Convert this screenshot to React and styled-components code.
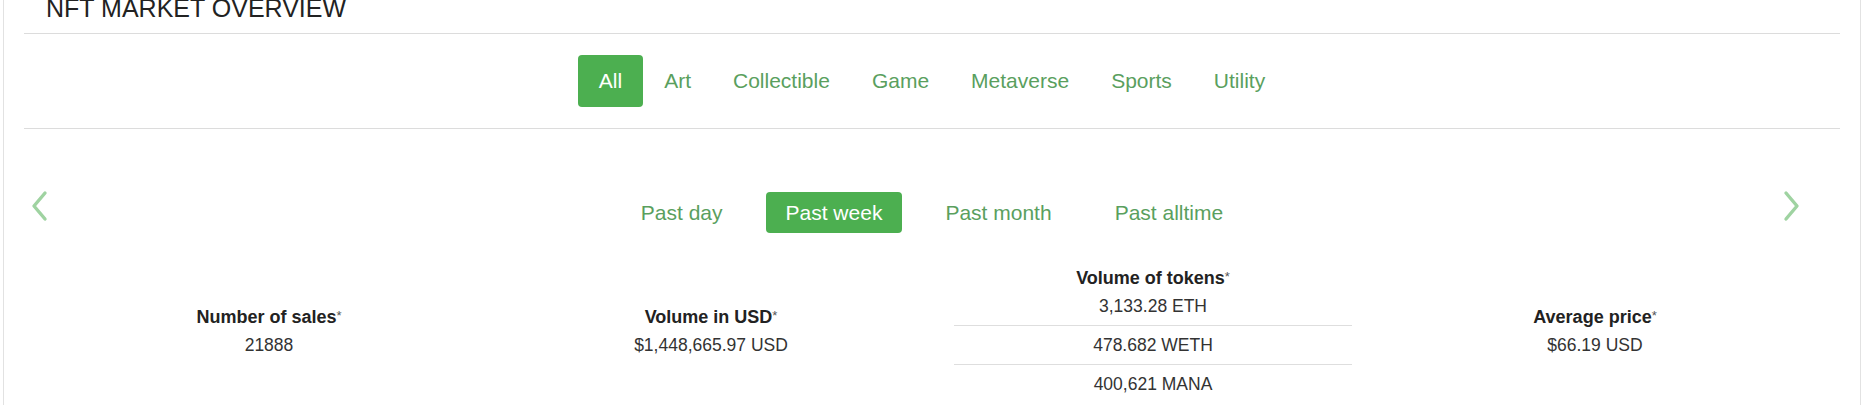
import React, { useState } from "react";
import styled, { createGlobalStyle } from "styled-components";

const categories = ["All", "Art", "Collectible", "Game", "Metaverse", "Sports", "Utility"];
const periods = ["Past day", "Past week", "Past month", "Past alltime"];

const stats = [
  { title: "Number of sales", values: ["21888"] },
  { title: "Volume in USD", values: ["$1,448,665.97 USD"] },
  { title: "Volume of tokens", values: ["3,133.28 ETH", "478.682 WETH", "400,621 MANA"] },
  { title: "Average price", values: ["$66.19 USD"] },
];

const Chevron = ({ dir }) => (
  <svg width="20" height="32" viewBox="0 0 20 32" fill="none">
    <path
      d={dir === "left" ? "M15 3 L4 16 L15 29" : "M5 3 L16 16 L5 29"}
      stroke="#9fd3a1"
      strokeWidth="3.4"
      strokeLinecap="round"
      strokeLinejoin="round"
    />
  </svg>
);

const App = () => {
  const [category, setCategory] = useState("All");
  const [period, setPeriod] = useState("Past week");
  return (
    <>
      <GlobalStyle />
      <Card>
        <Title>NFT MARKET OVERVIEW</Title>
        <CategoryBar>
          {categories.map((c) => (
            <CategoryBtn key={c} $active={c === category} onClick={() => setCategory(c)}>
              {c}
            </CategoryBtn>
          ))}
        </CategoryBar>
        <Carousel>
          <Arrow $side="left">
            <Chevron dir="left" />
          </Arrow>
          <Arrow $side="right">
            <Chevron dir="right" />
          </Arrow>
          <PeriodTabs>
            {periods.map((p) => (
              <PeriodBtn key={p} $active={p === period} onClick={() => setPeriod(p)}>
                {p}
              </PeriodBtn>
            ))}
          </PeriodTabs>
          <StatsGrid>
            {stats.map((s) => (
              <StatCol key={s.title}>
                <StatTitle>
                  {s.title}
                  <Star>*</Star>
                </StatTitle>
                {s.values.map((v) => (
                  <StatValue key={v}>{v}</StatValue>
                ))}
              </StatCol>
            ))}
          </StatsGrid>
        </Carousel>
      </Card>
    </>
  );
};

export default App;

const GlobalStyle = createGlobalStyle`
  html, body {
    margin: 0;
    padding: 0;
    background: #fff;
    overflow: hidden;
  }
  body {
    font-family: "Liberation Sans", Arial, sans-serif;
    color: #333;
  }
`;

const Card = styled.div`
  box-sizing: border-box;
  width: 1858px;
  margin: -40px 0 0 3px;
  padding: 0 20px 20px;
  border: 1px solid #e2e2e2;
  background: #fff;
`;

const Title = styled.div`
  padding: 35px 0 12px 22px;
  font-size: 25px;
  line-height: 25px;
  color: #222;
  text-transform: uppercase;
  border-bottom: 1px solid #dcdcdc;
`;

const CategoryBar = styled.div`
  display: flex;
  justify-content: center;
  padding: 21px 0;
  border-bottom: 1px solid #dcdcdc;
`;

const CategoryBtn = styled.div`
  display: flex;
  align-items: center;
  height: 52px;
  padding: 0 21px;
  border-radius: 4px;
  font-size: 21px;
  color: ${(p) => (p.$active ? "#fff" : "#5a9f5e")};
  background: ${(p) => (p.$active ? "#4caf50" : "transparent")};
  cursor: pointer;
`;

const Carousel = styled.div`
  position: relative;
  padding-top: 63px;
`;

const Arrow = styled.div`
  position: absolute;
  top: 61px;
  ${(p) => (p.$side === "left" ? "left: 6px;" : "right: 39px;")}
  display: flex;
  cursor: pointer;
`;

const PeriodTabs = styled.div`
  display: flex;
  justify-content: center;
  gap: 23px;
`;

const PeriodBtn = styled.div`
  display: flex;
  align-items: center;
  height: 41px;
  padding: 0 20px;
  border-radius: 4px;
  font-size: 21px;
  color: ${(p) => (p.$active ? "#fff" : "#5a9f5e")};
  background: ${(p) => (p.$active ? "#4caf50" : "transparent")};
  cursor: pointer;
`;

const StatsGrid = styled.div`
  display: grid;
  grid-template-columns: repeat(4, 442px);
  justify-content: center;
  align-items: center;
  margin-top: 37px;
`;

const StatCol = styled.div`
  display: flex;
  flex-direction: column;
  align-items: center;
  text-align: center;
`;

const StatTitle = styled.div`
  font-size: 18px;
  line-height: 17px;
  font-weight: 700;
  color: #222;
`;

const Star = styled.span`
  font-size: 13px;
  font-weight: 400;
  color: #555;
  vertical-align: top;
  line-height: 13px;
`;

const StatValue = styled.div`
  width: 90%;
  padding: 9px 0;
  font-size: 17.5px;
  line-height: 20px;
  color: #333;
  & + & {
    border-top: 1px solid #dedede;
  }
`;
